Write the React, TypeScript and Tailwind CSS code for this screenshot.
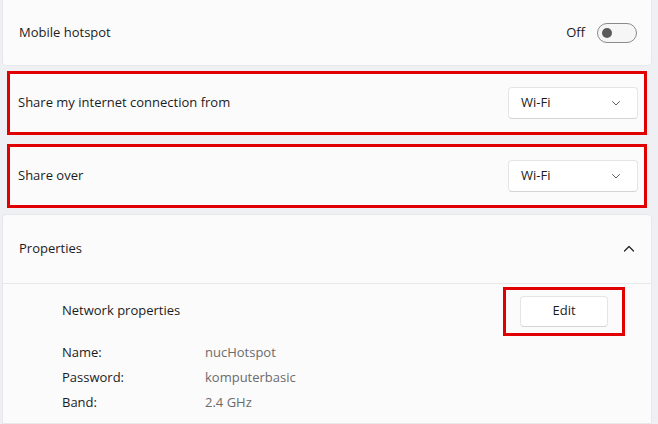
import React, { useState } from "react";

const ChevronDown = () => (
  <svg width="10" height="10" viewBox="0 0 10 10" fill="none">
    <path d="M1.5 3.5 L5 7 L8.5 3.5" stroke="#5f5f5f" strokeWidth="1" strokeLinecap="round" strokeLinejoin="round" />
  </svg>
);

const ChevronUp = () => (
  <svg width="12" height="12" viewBox="0 0 12 12" fill="none">
    <path d="M1.5 8 L6 3.5 L10.5 8" stroke="#1f1f1f" strokeWidth="1.2" strokeLinecap="round" strokeLinejoin="round" />
  </svg>
);

const Dropdown = ({ value }: { value: string }) => (
  <button
    type="button"
    className="flex items-center justify-between w-[130px] h-[32px] pl-3 pr-4 bg-white border border-[#e5e5e5] border-b-[#d4d4d4] rounded-[4px] text-[13px] text-[#1b1b1b]"
  >
    <span>{value}</span>
    <ChevronDown />
  </button>
);

export default function App() {
  const [on, setOn] = useState(false);

  return (
    <div
      className="flex flex-col w-[658px] h-[424px] overflow-hidden bg-[#eef0f3] pl-[2px] pr-[6px] text-[13px] text-[#1b1b1b]"
      style={{ fontFamily: '"Segoe UI", "Open Sans", "Noto Sans", sans-serif' }}
    >
      {/* Mobile hotspot */}
      <div className="flex items-center justify-between shrink-0 h-[67px] -mt-[1px] pl-4 pr-[14px] bg-[#fbfbfc] border border-[#e7e8ea] rounded-b-[4px]">
        <span>Mobile hotspot</span>
        <div className="flex items-center gap-3">
          <span>Off</span>
          <button
            type="button"
            onClick={() => setOn(!on)}
            className="relative w-[40px] h-[20px] rounded-full border border-[#8a8a8a] bg-[#f6f6f6]"
          >
            <span className="absolute left-[4px] top-[4px] w-[10px] h-[10px] rounded-full bg-[#5b5b5b]" />
          </button>
        </div>
      </div>

      {/* Share my internet connection from */}
      <div className="shrink-0 px-[5px] pt-[5px]">
        <div className="flex items-center justify-between h-[64px] pl-[8px] pr-[6px] bg-[#fbfbfc] border-[3px] border-[#e00000]">
          <span>Share my internet connection from</span>
          <Dropdown value="Wi-Fi" />
        </div>
      </div>

      {/* Share over */}
      <div className="shrink-0 px-[5px] pt-[9px]">
        <div className="flex items-center justify-between h-[64px] pl-[8px] pr-[6px] bg-[#fbfbfc] border-[3px] border-[#e00000]">
          <span>Share over</span>
          <Dropdown value="Wi-Fi" />
        </div>
      </div>

      {/* Properties */}
      <div className="flex-1 shrink-0 mt-[6px] bg-[#fbfbfc] border border-[#e7e8ea] rounded-t-[4px]">
        <div className="flex items-center justify-between h-[69px] pl-4 pr-[16px] border-b border-[#e7e8ea]">
          <span>Properties</span>
          <ChevronUp />
        </div>
        <div className="pl-[59px] pr-[26px] pt-[1px]">
          <div className="flex items-center justify-between h-[52px]">
            <span>Network properties</span>
            <div className="border-[3px] border-[#e00000] px-[14px] py-[6px] bg-[#fbfbfc]">
              <button
                type="button"
                className="w-[88px] h-[31px] bg-white border border-[#e5e5e5] border-b-[#d4d4d4] rounded-[4px] text-[13px]"
              >
                Edit
              </button>
            </div>
          </div>
          <div className="grid grid-cols-[143px_1fr] gap-y-[5px] mt-[5px] leading-[20px]">
            <span>Name:</span>
            <span className="text-[#6b6b6b]">nucHotspot</span>
            <span>Password:</span>
            <span className="text-[#6b6b6b]">komputerbasic</span>
            <span>Band:</span>
            <span className="text-[#6b6b6b]">2.4 GHz</span>
          </div>
        </div>
      </div>
    </div>
  );
}
